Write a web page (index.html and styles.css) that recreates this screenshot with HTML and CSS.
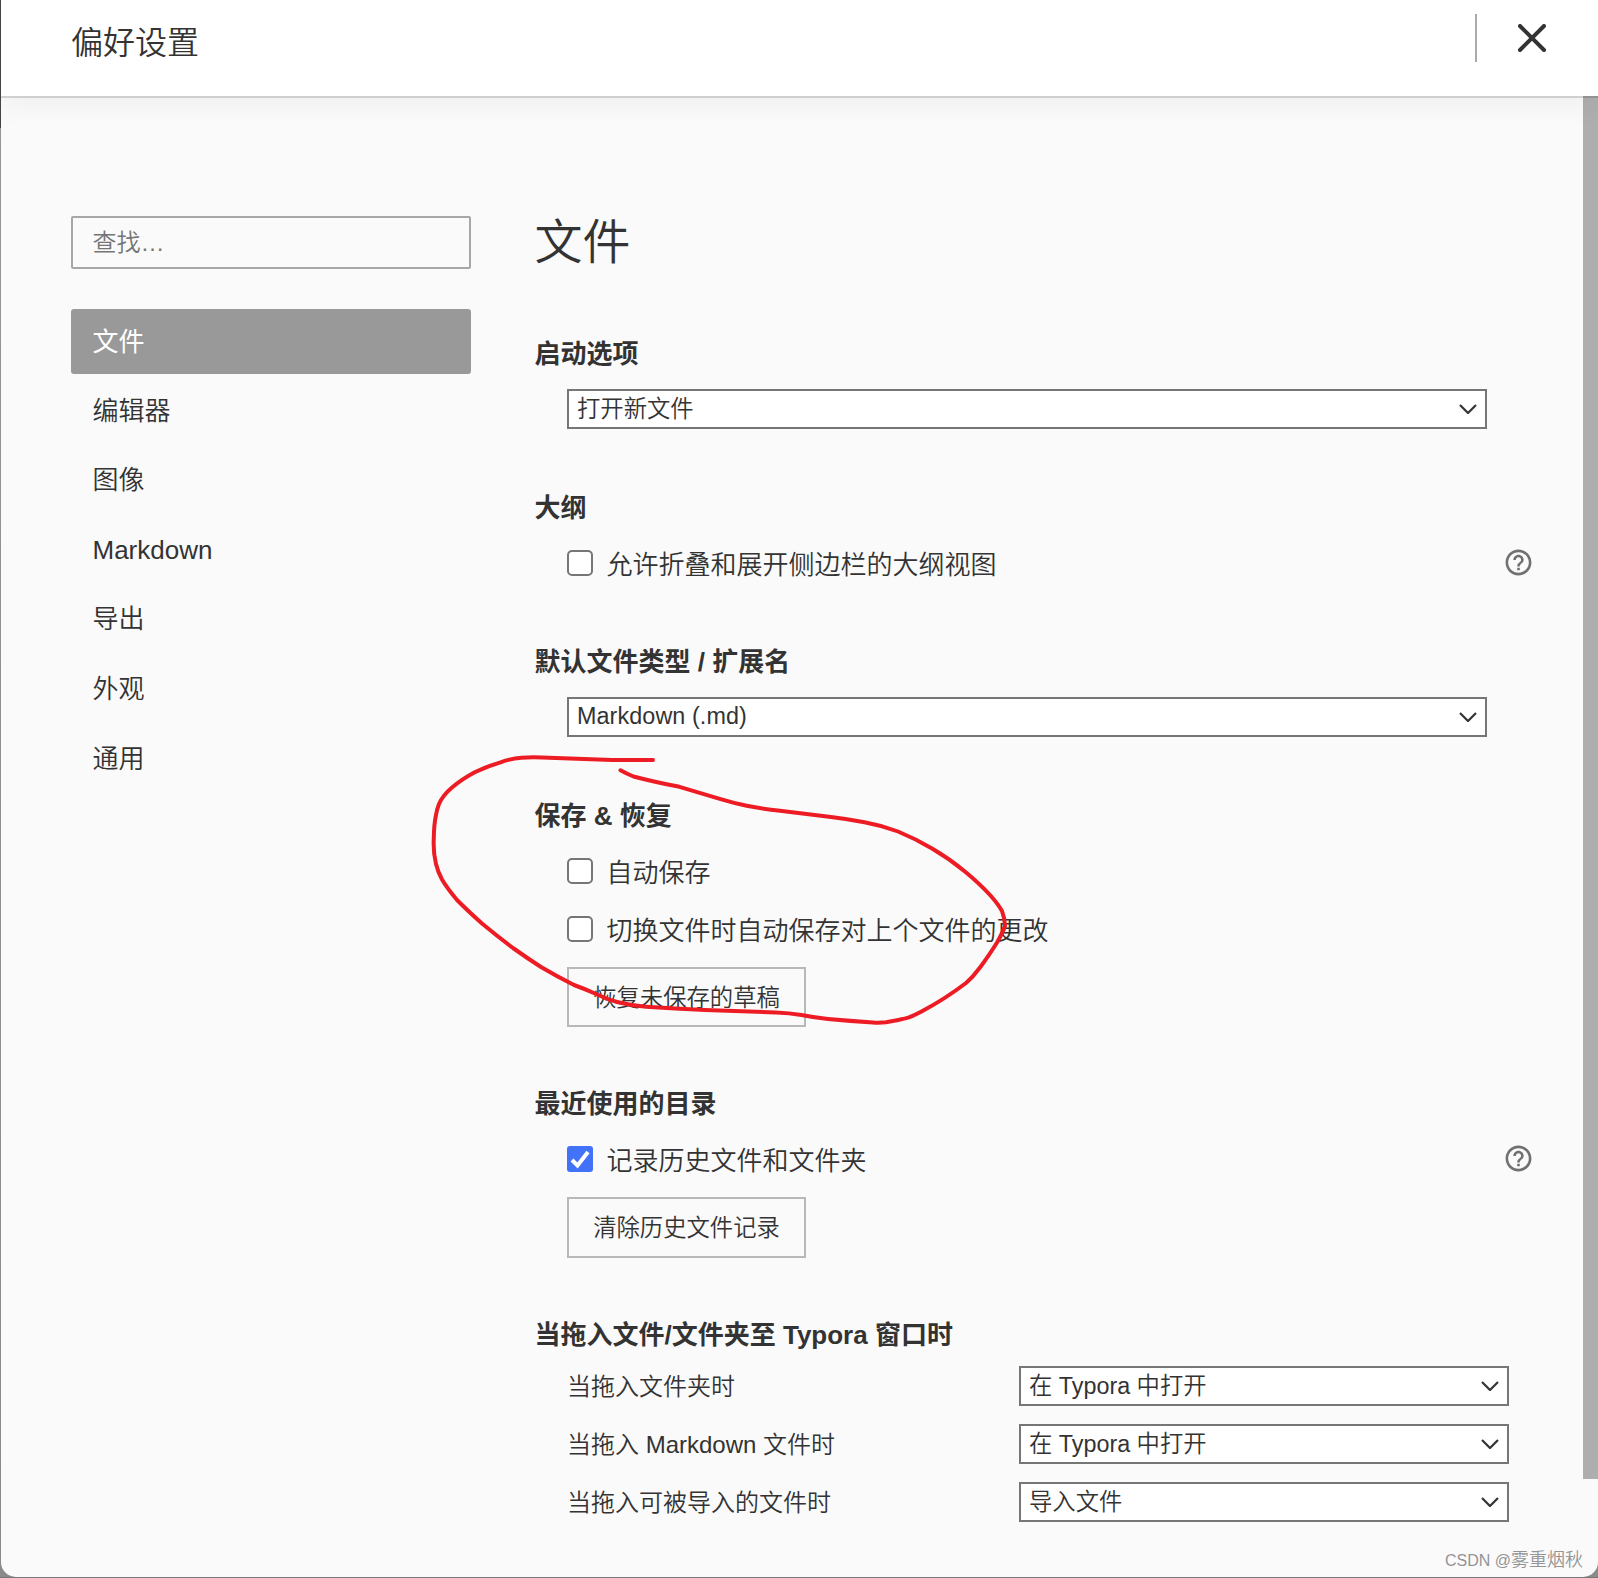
FILE: index.html
```html
<!DOCTYPE html>
<html lang="zh-CN">
<head>
<meta charset="utf-8">
<title>偏好设置</title>
<link rel="stylesheet" href="styles.css">
</head>
<body>
<svg class="symbols" aria-hidden="true">
  <symbol id="chevron" viewBox="0 0 18 10"><path d="M1 1l8 8 8-8" fill="none" stroke="#333" stroke-width="2.200"/></symbol>
  <symbol id="help" viewBox="0 0 24 24"><path fill="#707070" d="M11 18h2v-2h-2v2zm1-16C6.480 2 2 6.480 2 12s4.480 10 10 10 10-4.480 10-10S17.520 2 12 2zm0 18c-4.410 0-8-3.590-8-8s3.590-8 8-8 8 3.590 8 8-3.590 8-8 8zm0-14c-2.210 0-4 1.790-4 4h2c0-1.100.9-2 2-2s2 .9 2 2c0 2-3 1.750-3 5h2c0-2.250 3-2.500 3-5 0-2.210-1.790-4-4-4z"/></symbol>
</svg>
<div class="window">
  <header class="header">
    <h1 class="title">偏好设置</h1>
    <div class="close-area">
      <svg class="close" viewBox="0 0 28 28"><path d="M2 2l24 24M26 2L2 26" fill="none" stroke="#333" stroke-width="4" stroke-linecap="round"/></svg>
    </div>
  </header>
  <div class="body">
    <aside class="sidebar">
      <div class="search">查找…</div>
      <nav class="nav">
        <a class="nav-item active">文件</a>
        <a class="nav-item">编辑器</a>
        <a class="nav-item">图像</a>
        <a class="nav-item">Markdown</a>
        <a class="nav-item">导出</a>
        <a class="nav-item">外观</a>
        <a class="nav-item">通用</a>
      </nav>
    </aside>
    <main class="main">
      <h2 class="page-title">文件</h2>
      <section class="section">
        <h3 class="heading">启动选项</h3>
        <div class="select wide"><span>打开新文件</span><svg class="chevron"><use href="#chevron"/></svg></div>
      </section>
      <section class="section">
        <h3 class="heading">大纲</h3>
        <div class="row"><span class="checkbox"></span><span class="label">允许折叠和展开侧边栏的大纲视图</span><svg class="help"><use href="#help"/></svg></div>
      </section>
      <section class="section">
        <h3 class="heading">默认文件类型 / 扩展名</h3>
        <div class="select wide latin"><span>Markdown (.md)</span><svg class="chevron"><use href="#chevron"/></svg></div>
      </section>
      <section class="section has-button">
        <h3 class="heading">保存 &amp; 恢复</h3>
        <div class="row"><span class="checkbox"></span><span class="label">自动保存</span></div>
        <div class="row"><span class="checkbox"></span><span class="label">切换文件时自动保存对上个文件的更改</span></div>
        <div class="button">恢复未保存的草稿</div>
      </section>
      <section class="section has-button">
        <h3 class="heading">最近使用的目录</h3>
        <div class="row"><span class="checkbox checked"><svg class="check" viewBox="0 0 26 26"><path d="M5 14l5.500 5.500L21 6" fill="none" stroke="#fff" stroke-width="4"/></svg></span><span class="label">记录历史文件和文件夹</span><svg class="help"><use href="#help"/></svg></div>
        <div class="button">清除历史文件记录</div>
      </section>
      <section class="section drop">
        <h3 class="heading">当拖入文件/文件夹至 Typora 窗口时</h3>
        <div class="drop-row"><span class="drop-label">当拖入文件夹时</span><div class="select"><span>在 Typora 中打开</span><svg class="chevron"><use href="#chevron"/></svg></div></div>
        <div class="drop-row"><span class="drop-label">当拖入 Markdown 文件时</span><div class="select"><span>在 Typora 中打开</span><svg class="chevron"><use href="#chevron"/></svg></div></div>
        <div class="drop-row"><span class="drop-label">当拖入可被导入的文件时</span><div class="select"><span>导入文件</span><svg class="chevron"><use href="#chevron"/></svg></div></div>
      </section>
    </main>
    <div class="scrollbar"></div>
  </div>
</div>
<svg class="annotation" viewBox="0 0 1598 1578">
  <path d="M653 760L612 760L542 757.500Q532 757 521.500 757.700Q511 758.500 500.500 762.300Q488 766 475.200 772Q462 779 452 787.500Q443 795 439 804Q437 809 436 815Q434 824 433.800 838Q433 852 436 864Q438 872 442 879.500Q447 888 457 900Q468 911 482 923.500Q497 936 513 948Q527 958 541 967Q557 976.500 574 985Q585 989 595 993.500Q606 999 617 1002Q631 1005.500 646 1006.700Q675 1008.500 705 1010Q740 1011 776 1012.500Q789 1013 801.500 1015Q814 1017.500 828 1019Q850 1021 873 1022.500Q879 1023 886 1022.300Q898 1020.500 909 1017.300Q915 1015 921.500 1011.500Q945 999 966 983Q973 977 980 967.500Q990 954 997 942.500Q1003 932 1005 926Q1005 919 1002 911Q998 904 990.500 895.500Q980 884 965.500 872Q950 859 932 848.500Q915 838.500 898 831.500Q882 825.500 864.500 822.300Q848 819 831 817L780 810.800Q763 809 746.700 805.800Q734 803 721.500 799.300L679.500 786.800Q667 784.500 654 781.500Q643 779 633.500 776.500Q627 774 620.500 770.300"/>
</svg>
<div class="watermark">CSDN @<span class="watermark-name">雾重烟秋</span></div>
</body>
</html>
```
FILE: styles.css
```css
* { box-sizing: border-box; }

body {
  margin: 0;
  width: 1598px;
  height: 1578px;
  padding: 0 0 1px 1px;
  overflow: hidden;
  position: relative;
  background: linear-gradient(#444 128px, #959595 128px, #8a8a8a 1577px, #777 1577px);
  color: #333;
  font-family: "Liberation Sans", "Noto Sans CJK SC", sans-serif;
  font-weight: 350;
}

.symbols { position: absolute; width: 0; height: 0; }

.window {
  width: 1597px;
  height: 1577px;
  display: flex;
  flex-direction: column;
  background: #fafafa;
  border-radius: 0 0 15px 15px;
  overflow: hidden;
}

.header {
  flex: none;
  height: 96px;
  display: flex;
  justify-content: space-between;
  align-items: flex-start;
  padding: 14px 0 0 70px;
  background: #fff;
  position: relative;
  z-index: 1;
  box-shadow: 0 0 0 2px rgba(0, 0, 0, .14), 0 8px 30px rgba(0, 0, 0, .05);
}

.title { margin: 7px 0 0; font-size: 32px; line-height: 44px; font-weight: 350; }

.close-area {
  width: 123px;
  height: 48px;
  padding: 10px 0 0 41px;
  border-left: 2px solid #aaa;
}

.close { display: block; width: 28px; height: 28px; }

.body { flex: 1; display: flex; min-height: 0; }

.sidebar { width: 470px; padding: 120px 0 0 70px; }

.search {
  height: 53px;
  border: 2px solid #a7a7a7;
  border-radius: 2px;
  padding-left: 19.500px;
  font-size: 24px;
  line-height: 49px;
  color: #757575;
}

.nav { display: flex; flex-direction: column; gap: 4.600px; margin-top: 40px; }

.nav-item {
  height: 65px;
  padding-left: 21.500px;
  border-radius: 3px;
  font-size: 26px;
  line-height: 65px;
}

.nav-item.active { background: #999; color: #fff; font-weight: 400; line-height: 66px; }

.main { flex: 1; padding: 117px 51px 0 63.500px; }

.page-title { margin: 0 0 63px; font-size: 48px; line-height: 60px; font-weight: 350; }

.section { display: flex; flex-direction: column; gap: 17px; margin-bottom: 61px; }
.section.has-button { gap: 18px; margin-bottom: 59px; }
.section.has-button .heading { margin-bottom: -1px; }

.heading { margin: 0; font-size: 26px; line-height: 36px; font-weight: 700; }

.select {
  display: flex;
  justify-content: space-between;
  align-items: center;
  width: 490px;
  height: 40px;
  padding: 0 8px;
  border: 2px solid #767676;
  background: #fff;
  font-size: 23.330px;
  line-height: 36px;
}

.select.latin span { padding-bottom: 2px; letter-spacing: .1px; }
.select.wide { width: 920px; margin-left: 32.500px; }

.chevron { width: 18px; height: 10px; }

.row { display: flex; align-items: center; height: 40px; margin-left: 32.500px; }

.checkbox {
  flex: none;
  width: 26px;
  height: 26px;
  margin-right: 13.500px;
  border: 2px solid #767676;
  border-radius: 5px;
  background: #fff;
}

.checkbox.checked { border: 0; border-radius: 3px; background: #4272f8; }
.check { display: block; width: 26px; height: 26px; }

.label { flex: 1; padding-top: 4px; font-size: 26px; line-height: 40px; }
.help { width: 31px; height: 31px; margin: -2px -2px 0 0; }

.button {
  width: 239px;
  height: 60.400px;
  margin-left: 32.500px;
  border: 2px solid #b8b8b8;
  font-size: 23.330px;
  line-height: 59px;
  text-align: center;
}

.section.drop .heading { margin-bottom: -4px; }

.drop-row { display: flex; justify-content: space-between; width: 942px; margin-left: 32.500px; margin-bottom: 1px; }
.drop-label { font-size: 24px; line-height: 42px; height: 40px; }

.scrollbar { width: 15px; height: 1383px; background: #aeaeae; }

.annotation {
  position: absolute;
  left: 0;
  top: 0;
  width: 1598px;
  height: 1578px;
  fill: none;
  stroke: #ed1c24;
  stroke-width: 4;
  stroke-linecap: round;
  stroke-linejoin: round;
}

.watermark {
  position: absolute;
  right: 15px;
  bottom: 5px;
  font-size: 16px;
  line-height: 24px;
  color: #949494;
}

.watermark-name { font-size: 18px; }
```
